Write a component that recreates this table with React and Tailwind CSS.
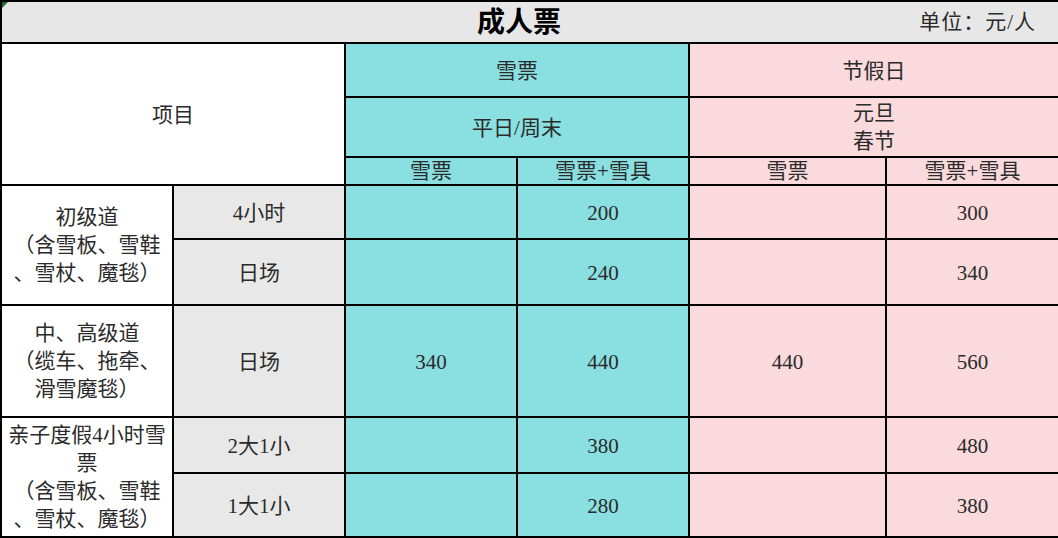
const font = "font-[family-name:'Liberation_Serif','Noto_Sans_CJK_SC',serif]";

const teal = "bg-[#8adfe0]";
const pink = "bg-[#fadadd]";
const gray = "bg-[#e8e8e8]";

const cell = "border-2 border-black text-center align-middle p-0";
const padded = `${cell} pt-[4px]`;

const Lines = ({ lines }) => (
  <div className="leading-[28px]">
    {lines.map((l, i) => (
      <div key={i} className="whitespace-nowrap">
        {l}
      </div>
    ))}
  </div>
);

const rows = [
  { h: "h-[54px]", sub: "4小时", v: ["", "200", "", "300"] },
  { h: "h-[66px]", sub: "日场", v: ["", "240", "", "340"] },
  { h: "h-[112px]", sub: "日场", v: ["340", "440", "440", "560"] },
  { h: "h-[56px]", sub: "2大1小", v: ["", "380", "", "480"] },
  { h: "h-[64px]", sub: "1大1小", v: ["", "280", "", "380"] },
];

const groups = {
  0: { span: 2, lines: ["初级道", "（含雪板、雪鞋", "、雪杖、魔毯）"] },
  2: { span: 1, lines: ["中、高级道", "（缆车、拖牵、", "滑雪魔毯）"] },
  3: {
    span: 2,
    lines: ["亲子度假4小时雪", "票", "（含雪板、雪鞋", "、雪杖、魔毯）"],
  },
};

export default function App() {
  return (
    <div className={`w-[1058px] h-[538px] bg-white overflow-hidden ${font} text-[21px] text-[#2b2b2b]`}>
      <table className="table-fixed border-collapse w-[1058px]">
        <colgroup>
          <col className="w-[172px]" />
          <col className="w-[172px]" />
          <col className="w-[172px]" />
          <col className="w-[172px]" />
          <col className="w-[197px]" />
          <col className="w-[173px]" />
        </colgroup>
        <tbody>
          <tr className="h-[42px]">
            <td colSpan={6} className={`${cell} bg-[#e7e7e7] relative`}>
              <div className="absolute left-0 top-0 w-0 h-0 border-t-[6px] border-r-[6px] border-t-[#1e6b2e] border-r-transparent" />
              <div className="grid grid-cols-[1fr_auto_1fr] items-center pt-[2px]">
                <div />
                <div className="font-bold text-[28px] leading-[36px] text-black pr-[22px]">成人票</div>
                <div className="text-right pr-[22px] tracking-[1px]">单位：元/人</div>
              </div>
            </td>
          </tr>
          <tr className="h-[54px]">
            <td colSpan={2} rowSpan={3} className={`${padded} bg-white`}>
              项目
            </td>
            <td colSpan={2} className={`${padded} ${teal}`}>
              雪票
            </td>
            <td colSpan={2} className={`${padded} ${pink}`}>
              节假日
            </td>
          </tr>
          <tr className="h-[60px]">
            <td colSpan={2} className={`${padded} ${teal}`}>
              平日/周末
            </td>
            <td colSpan={2} className={`${cell} ${pink}`}>
              <Lines lines={["元旦", "春节"]} />
            </td>
          </tr>
          <tr className="h-[28px] leading-[24px]">
            <td className={`${cell} ${teal}`}>雪票</td>
            <td className={`${cell} ${teal}`}>雪票+雪具</td>
            <td className={`${cell} ${pink}`}>雪票</td>
            <td className={`${cell} ${pink}`}>雪票+雪具</td>
          </tr>
          {rows.map((r, i) => (
            <tr key={i} className={r.h}>
              {groups[i] && (
                <td rowSpan={groups[i].span} className={`${cell} bg-white`}>
                  <Lines lines={groups[i].lines} />
                </td>
              )}
              <td className={`${padded} ${gray}`}>{r.sub}</td>
              <td className={`${padded} ${teal}`}>{r.v[0]}</td>
              <td className={`${padded} ${teal}`}>{r.v[1]}</td>
              <td className={`${padded} ${pink}`}>{r.v[2]}</td>
              <td className={`${padded} ${pink}`}>{r.v[3]}</td>
            </tr>
          ))}
        </tbody>
      </table>
    </div>
  );
}
